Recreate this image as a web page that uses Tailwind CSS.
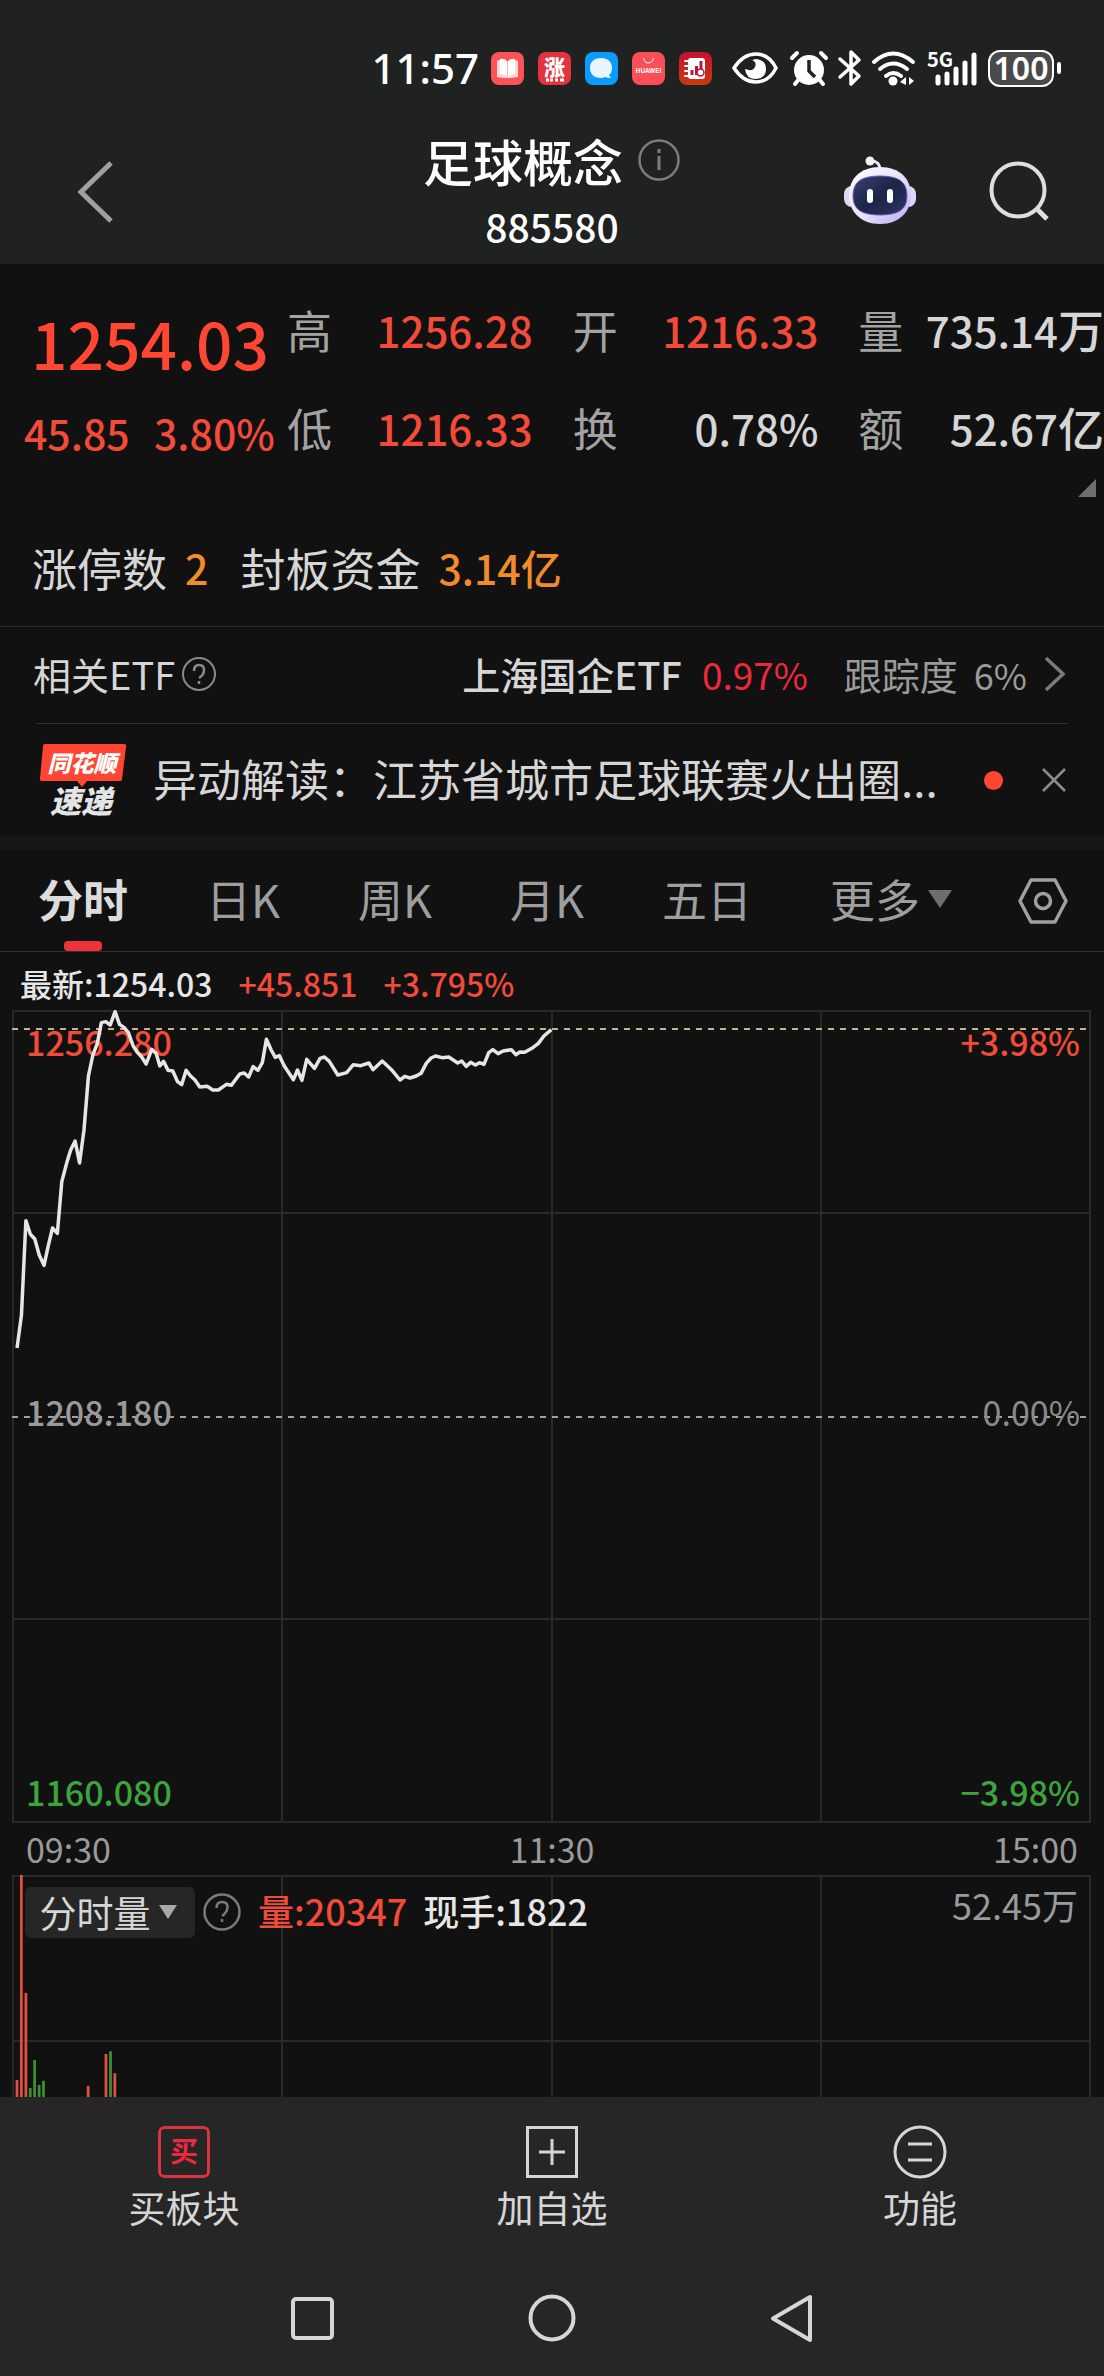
<!DOCTYPE html>
<html lang="zh-CN">
<head>
<meta charset="utf-8">
<meta name="viewport" content="width=device-width, initial-scale=1">
<title>足球概念 885580</title>
<script src="https://cdn.jsdelivr.net/npm/@tailwindcss/browser@4"></script>
</head>
<body class="bg-[#111111] font-['Noto_Sans_CJK_SC','Noto_Sans',sans-serif] text-[#d6d6d6]">
<div class="flex min-h-screen flex-col overflow-x-hidden">

  <!-- Status bar and title -->
  <header class="bg-[#202221] text-white">
    <div class="flex h-[132px] items-center justify-end pt-1 pr-[43px]">
      <span class="mr-3 font-['Noto_Sans'] text-[42px] leading-none font-medium">11:57</span>
      <div class="flex items-center gap-[14px]">
        <svg class="size-[33px]" viewBox="0 0 33 33"><rect width="33" height="33" rx="8" fill="#fb5358"/><path d="M6 9q6-3 10.500 1Q21 6 27 9v16q-6 1-10.500 1Q12 26 6 25z" fill="#ffd9d9"/><path d="M9 7q5-1 7.500 3Q19 6 24 7v15q-5 0-7.500 3Q14 22 9 22z" fill="#fff"/><path d="M16.500 10v14" stroke="#f5b4b4"/></svg>
        <svg class="size-[33px] overflow-visible" viewBox="0 0 33 33"><rect width="33" height="33" rx="8" fill="#e2333f"/><text x="16.500" y="23" text-anchor="middle" font-size="21" font-weight="900" fill="#fff">涨</text><path d="M8 28h3m1 0h3m2 0h3m2 0h4" stroke="#fff" stroke-width="3"/></svg>
        <svg class="size-[33px]" viewBox="0 0 33 33"><rect width="33" height="33" rx="8" fill="#0a9cff"/><path d="M16 6c7 0 11 4 11 10q0 5-3 7l2 3q-4 0-6-1-2 1-4 1C9 26 5 22 5 16S9 6 16 6z" fill="#eaf6ff"/></svg>
        <svg class="size-[33px]" viewBox="0 0 33 33"><rect width="33" height="33" rx="8" fill="#fb4f58"/><path d="M11.500 6q1 5 5 5t5-5" fill="none" stroke="#fff"/><text x="16.500" y="21" text-anchor="middle" font-size="6.500" font-weight="700" fill="#fff">HUAWEI</text></svg>
        <svg class="size-[33px]" viewBox="0 0 33 33"><defs><linearGradient id="note" x2="0" y2="1"><stop stop-color="#c8102e"/><stop offset="1" stop-color="#c93a0c"/></linearGradient></defs><rect width="33" height="33" rx="8" fill="url(#note)"/><rect x="9" y="6" width="17" height="21" rx="3" fill="#fff"/><path d="M6 9h5M6 14h5M6 19h5M6 24h5" stroke="#fff" stroke-width="2" stroke-linecap="round"/><path d="M13 23v-5M17.500 23v-9M22 23V9" stroke="#b3173a" stroke-width="3"/><circle cx="21.500" cy="20.500" r="3.500" fill="#fff" stroke="#b3173a" stroke-width="1.500"/></svg>
      </div>
      <svg class="ml-5 h-10 w-[248px] overflow-visible" viewBox="0 0 248 40" fill="none" stroke="#fff">
        <path d="M2 20Q11 6 24 6t20 14Q37 34 24 34T2 20z" stroke-width="3.500"/>
        <path d="M20 12q5 2 3 7t-10 2q1 10 11 10 10-1 10-10T24 11z" fill="#fff" stroke="none"/>
        <circle cx="77" cy="22" r="15" fill="#fff" stroke="none"/><path d="M60 10l5-5M94 10l-5-5M63 36l4-5M91 36l-4-5" stroke-width="4" stroke-linecap="round"/><path d="M77 12v11l6 6" stroke="#202221" stroke-width="3.500"/>
        <path d="M108 11l19 17-8 8V4l8 8-19 17" stroke-width="3.500" stroke-linejoin="round" stroke-linecap="round"/>
        <path d="M142 14q19-17 39 0M148 21q13-11 27 0M154 28q7-6 15 0" stroke-width="4" stroke-linecap="round"/><circle cx="161" cy="33" r="4.500" fill="#fff" stroke="none"/><path d="M174 29v8l-6-3zM177 29v8l5-4z" fill="#fff" stroke="none"/>
        <path d="M206 29v6M215 26v9M224 21v14M233 15v20M242 7v28" stroke-width="5" stroke-linecap="round"/><text x="195" y="19" font-size="20" font-weight="700" fill="#fff" stroke="none">5G</text>
      </svg>
      <span class="ml-2 flex h-[37px] w-[66px] items-center justify-center rounded-xl border-2 border-white bg-[#4a4a4a] font-['Noto_Sans'] text-[32px] leading-none font-semibold">100</span>
      <span class="ml-[3px] h-3 w-1 rounded-sm bg-white"></span>
    </div>
    <div class="grid h-[132px] grid-cols-[1fr_auto_1fr] items-start">
      <button class="mt-7 ml-[76px] h-16 w-10" aria-label="返回"><svg viewBox="0 0 40 64" class="h-16 w-10" fill="none" stroke="#a0a0a0" stroke-width="5"><path d="M35 3L5 32l30 29"/></svg></button>
      <div class="flex flex-col items-center">
        <div class="flex items-center gap-[14px]">
          <h1 class="text-[50px] leading-[56px] font-medium whitespace-nowrap">足球概念</h1>
          <button class="size-[44px]" aria-label="说明"><svg viewBox="0 0 44 44" fill="none" stroke="#7c7c7c" stroke-width="2.500"><circle cx="22" cy="22" r="19.500"/><path d="M22 18v14M22 11v4" stroke-width="3"/></svg></button>
        </div>
        <p class="mt-4 text-[39px] leading-[44px] font-medium">885580</p>
      </div>
      <div class="mt-[22px] flex justify-end gap-[70px] pr-[54px]">
        <button aria-label="智能助手"><svg class="h-[74px] w-[76px]" viewBox="0 0 76 74"><defs><linearGradient id="shell" x1="0" y1="0" x2="1" y2="1"><stop stop-color="#ffffff"/><stop offset=".55" stop-color="#e6e0fb"/><stop offset="1" stop-color="#b9a8f2"/></linearGradient><linearGradient id="face" x1="0" x2="1" y2="1"><stop stop-color="#39436b"/><stop offset=".5" stop-color="#1b2449"/><stop offset="1" stop-color="#2c3560"/></linearGradient></defs><rect x="2" y="32" width="72" height="21" rx="8" fill="#dcd8fa"/><path d="M28 7q10-1 10 10" fill="none" stroke="#e9e7f7" stroke-width="3"/><circle cx="28" cy="7" r="4.500" fill="#f1f0fa"/><path d="M38 13C58 13 69 25 69 41S58 70 38 70 7 57 7 41 18 13 38 13z" fill="url(#shell)"/><path d="M38 22c19 0 27 6 27 20 0 13-8 19-27 19s-27-6-27-19c0-14 8-20 27-20z" fill="url(#face)" stroke="#7263c8"/><path d="M28 38v8M48 38v8" stroke="#fff" stroke-width="6" stroke-linecap="round"/></svg></button>
        <button aria-label="搜索"><svg class="size-[62px]" viewBox="0 0 62 62" fill="none" stroke="#dedede" stroke-width="4"><circle cx="30" cy="30" r="26.500"/><path d="M48 48l11 11" stroke-width="5"/></svg></button>
      </div>
    </div>
  </header>

  <main class="flex-1">
    <!-- Quote -->
    <section class="border-b border-[#2a2b2b]">
      <div class="flex pt-[17px]">
        <div class="w-[287px] shrink-0 text-[#ff4733]">
          <p class="flex h-[98px] items-center pt-6 pl-[31px] text-[64px] leading-none font-medium">1254.03</p>
          <p class="flex h-[98px] items-center pt-2 pl-[24px] text-[41px] leading-none font-medium text-[#f24b39]"><span class="w-[130px]">45.85</span><span>3.80%</span></p>
        </div>
        <dl class="grid flex-1 grid-cols-3 gap-x-10 text-[45px] leading-[98px] whitespace-nowrap [&_dd]:text-[42px] [&_dd]:font-medium [&_dt]:text-[#a3a3a3] [&>div]:flex [&>div]:justify-between">
          <div><dt>高</dt><dd class="text-[#f24b39]">1256.28</dd></div>
          <div><dt>开</dt><dd class="text-[#f24b39]">1216.33</dd></div>
          <div><dt>量</dt><dd>735.14<span class="text-[46px] leading-none">万</span></dd></div>
          <div><dt>低</dt><dd class="text-[#f24b39]">1216.33</dd></div>
          <div><dt>换</dt><dd>0.78%</dd></div>
          <div><dt>额</dt><dd>52.67<span class="text-[46px] leading-none">亿</span></dd></div>
        </dl>
      </div>
      <div class="flex h-9 items-start justify-end pt-[2px] pr-2"><svg class="h-[18px] w-[18px]" viewBox="0 0 18 18"><path d="M18 0v18H0z" fill="#6e6e6e"/></svg></div>
      <p class="flex h-[113px] items-center pb-1 pl-8 text-[45px] leading-none">涨停数<span class="mr-8 ml-[18px] text-[41px] font-medium text-[#f28c2b]">2</span>封板资金<span class="ml-[18px] text-[41px] font-medium text-[#f28c2b]">3.14亿</span></p>
    </section>

    <!-- Related ETF -->
    <section class="mx-[37px] flex h-[97px] items-center border-b border-[#303131] pb-[2px] text-[38px] leading-none whitespace-nowrap">
      <span class="-ml-1">相关ETF</span>
      <svg class="ml-[6px] size-9" viewBox="0 0 36 36" fill="none" stroke="#8a8a8a" stroke-width="2"><circle cx="18" cy="18" r="16"/><path d="M13 15q0-6 5-6t5 5-5 8M18 25v3" stroke-width="2.500"/></svg>
      <a href="#" class="ml-auto flex items-center"><span class="font-medium">上海国企ETF</span><span class="ml-5 text-[37px] text-[#f0283c]">0.97%</span><span class="ml-9 text-[#9a9a9a]">跟踪度</span><span class="ml-4 text-[36px] text-[#9a9a9a]">6%</span><svg class="ml-4 h-9 w-6" viewBox="0 0 24 36" fill="none" stroke="#7a7a7a" stroke-width="3.500"><path d="M3 2l17 16L3 34"/></svg></a>
    </section>

    <!-- News -->
    <section class="flex h-[112px] items-center pr-[37px] pl-[39px] whitespace-nowrap">
      <svg class="h-[74px] w-[88px] shrink-0 overflow-visible" viewBox="0 0 88 74"><path d="M6 1h79q3 0 2 3l-4 32q0 2-3 2H48l-5 6-5-6H3q-3 0-2-3L4 4q0-3 2-3z" fill="#ff4632"/><text x="43" y="29" text-anchor="middle" font-size="23" font-weight="900" font-style="italic" fill="#fff">同花顺</text><text x="42" y="70" text-anchor="middle" font-size="31" font-weight="900" font-style="italic" fill="#e4e4e4">速递</text></svg>
      <a href="#" class="ml-[26px] min-w-0 pb-1 text-[44px] leading-[60px]">异动解读：江苏省城市足球联赛火出圈...</a>
      <span class="ml-auto size-[19px] shrink-0 rounded-full bg-[#ff4632]"></span>
      <button class="ml-[38px] shrink-0" aria-label="关闭"><svg class="size-[26px]" viewBox="0 0 26 26" stroke="#8c8c8c" stroke-width="2.500"><path d="M2 2l22 22M24 2L2 24"/></svg></button>
    </section>
    <div class="h-[14px] bg-[#161616]"></div>

    <!-- Period tabs -->
    <nav class="flex h-[102px] items-center justify-between border-b border-[#303131] pr-[36px] pl-[38px] text-[45px] leading-none whitespace-nowrap text-[#9e9e9e]">
      <button class="relative h-full pb-1 font-bold text-[#dcdcdc]">分时<span class="absolute bottom-0 left-1/2 h-[10px] w-[38px] -translate-x-1/2 rounded bg-[#ee3338]"></span></button>
      <button class="pb-1">日K</button>
      <button class="pb-1">周K</button>
      <button class="pb-1">月K</button>
      <button class="pb-1">五日</button>
      <button class="-mr-3 flex items-center pb-1">更多<svg class="ml-2 h-5 w-6" viewBox="0 0 24 20"><path d="M0 1h24L12 19z" fill="#6e6e6e"/></svg></button>
      <button aria-label="设置"><svg class="size-[50px]" viewBox="0 0 50 50" fill="none" stroke="#a0a0a0" stroke-width="3.500"><path d="M13 4h24l11 21-11 21H13L2 25z" stroke-linejoin="round"/><circle cx="25" cy="25" r="7.500"/></svg></button>
    </nav>

    <p class="flex h-[58px] items-center gap-[26px] pt-1 pl-5 text-[32px] leading-none font-medium whitespace-nowrap text-[#f24b39]"><span class="text-[#e6e6e6]">最新:1254.03</span><span>+45.851</span><span>+3.795%</span></p>

    <!-- Intraday price chart -->
    <section class="relative h-[813px] text-[34px] leading-[44px] font-medium">
      <svg class="h-full w-full" viewBox="0 1010 1104 813" preserveAspectRatio="none" fill="none">
        <path d="M13 1011H1090V1822H13zM13 1213H1090M13 1619H1090M282 1011V1822M552 1011V1822M821 1011V1822" stroke="#282929" stroke-width="2"/>
        <path d="M12 1029H1090" stroke="#c2b48c" stroke-width="2" stroke-dasharray="6 6"/>
        <path d="M12 1417H1090" stroke="#a0a0a0" stroke-width="2" stroke-dasharray="6 6"/>
      </svg>
      <span class="absolute top-[10px] left-[26px] text-[#f24b39]">1256.280</span>
      <span class="absolute top-[10px] right-[24px] text-[#f24b39]">+3.98%</span>
      <span class="absolute top-[380px] left-[26px] text-[#9a9a9a]">1208.180</span>
      <span class="absolute top-[380px] right-[24px] font-normal text-[#8a8a8a]">0.00%</span>
      <span class="absolute bottom-[9px] left-[26px] text-[#3da43d]">1160.080</span>
      <span class="absolute right-[24px] bottom-[9px] text-[#3da43d]">−3.98%</span>
      <svg class="absolute inset-0 h-full w-full" viewBox="0 1010 1104 813" preserveAspectRatio="none" fill="none">
        <path transform="translate(0 990) scale(.37 .33333)" vector-effect="non-scaling-stroke" stroke="#e6e6e6" stroke-width="3.500" stroke-linejoin="round" d="M46 1074L58 975 70 692 82 733 94 747 106 795 119 826 131 765 142 714 155 730 167 575 180 520 191 480 203 453 215 519 227 420 239 258 251 195 263 160 274 98 286 95 298 105 311 65 323 103 335 112 347 128 360 168 372 188 383 201 395 222 410 178 422 190 432 228 442 214 454 241 467 243 480 275 491 284 503 241 515 258 527 270 540 291 560 289 575 300 590 300 612 283 625 286 648 252 660 249 672 261 684 230 697 241 709 218 720 148 733 180 744 202 755 197 768 227 793 269 804 240 816 271 829 208 850 235 865 205 877 201 890 214 913 255 937 248 955 224 975 227 997 219 1008 239 1033 213 1058 239 1081 270 1094 259 1108 264 1125 258 1138 250 1152 220 1165 204 1177 198 1195 203 1213 201 1237 219 1248 213 1260 229 1272 217 1285 225 1296 218 1308 223 1321 188 1332 179 1346 191 1360 183 1382 179 1394 194 1405 186 1418 187 1440 173 1455 160 1470 138 1490 119"/>
      </svg>
    </section>

    <div class="grid h-[52px] grid-cols-3 items-center px-[26px] text-[34px] leading-none text-[#9a9a9a]"><span>09:30</span><span class="text-center">11:30</span><span class="text-right">15:00</span></div>

    <!-- Volume chart -->
    <section class="relative h-[222px]">
      <svg class="absolute inset-0 h-full w-full" viewBox="0 1875 1104 222" preserveAspectRatio="none" fill="none">
        <path d="M13 2097V1876H1090V2097M13 2041H1090M282 1876V2097M552 1876V2097M821 1876V2097" stroke="#282929" stroke-width="2"/>
        <g transform="translate(0 1740) scale(.3954 .33333)" stroke-width="7"><path d="M43 1072V1020M54 1072V403M65.500 1072V759M223 1072V1038M268 1072V942M290.500 1072V1000" stroke="#e2503f"/><path d="M76.500 1072V1044M87.500 1072V960M99 1072V1035M110 1072V1022M279.500 1072V934" stroke="#3f8f33"/></g>
      </svg>
      <div class="relative flex items-center pt-[11px] pr-[26px] pl-[25px] text-[36px] leading-none whitespace-nowrap">
        <button class="flex h-[51px] w-[170px] items-center justify-center gap-2 rounded-md bg-[#262626] pr-1 text-[37px] text-[#d6d6d6]">分时量<svg class="h-4 w-[18px]" viewBox="0 0 18 16"><path d="M0 1h18L9 15z" fill="#a8a8a8"/></svg></button>
        <svg class="ml-2 size-[38px]" viewBox="0 0 38 38" fill="none" stroke="#7a7a7a" stroke-width="2.500"><circle cx="19" cy="19" r="17.500"/><path d="M13.500 15q0-6 5.500-6t5.500 5-5.500 9M19 26v3"/></svg>
        <span class="ml-[17px] pb-1 font-medium text-[#f24b39]">量:20347</span>
        <span class="ml-4 pb-1 font-medium text-[#e6e6e6]">现手:1822</span>
        <span class="ml-auto pb-4 text-[#9a9a9a]">52.45万</span>
      </div>
    </section>
  </main>

  <footer class="bg-[#262626]">
    <nav class="grid h-[150px] grid-cols-3 pt-7 text-[37px] leading-none">
      <button class="flex flex-col items-center gap-[10px]"><svg class="size-[54px] overflow-visible" viewBox="0 0 54 54"><rect x="2.500" y="2.500" width="49" height="49" rx="5" fill="none" stroke="#d8353d" stroke-width="3"/><text x="27" y="37" text-anchor="middle" font-size="28" font-weight="700" fill="#f0283c">买</text></svg>买板块</button>
      <button class="flex flex-col items-center gap-[10px]"><svg class="size-[54px]" viewBox="0 0 54 54" fill="none" stroke="#d6d6d6" stroke-width="3"><rect x="2.500" y="2.500" width="49" height="49"/><path d="M27 14v26M14 27h26"/></svg>加自选</button>
      <button class="flex flex-col items-center gap-[10px]"><svg class="size-[54px]" viewBox="0 0 54 54" fill="none" stroke="#d6d6d6" stroke-width="3"><circle cx="27" cy="27" r="25"/><path d="M15 19h24M15 35h24"/></svg>功能</button>
    </nav>
    <div class="flex h-[129px] items-center justify-center gap-[190px] pt-3">
      <button aria-label="最近任务"><svg class="size-[50px]" viewBox="0 0 50 50" fill="none" stroke="#d6d6d6" stroke-width="4"><rect x="6" y="6" width="39" height="39" rx="3"/></svg></button>
      <button aria-label="主屏幕"><svg class="size-[50px]" viewBox="0 0 50 50" fill="none" stroke="#d6d6d6" stroke-width="4"><circle cx="25" cy="25" r="21.500"/></svg></button>
      <button aria-label="返回上一级"><svg class="size-[50px]" viewBox="0 0 50 50" fill="none" stroke="#d6d6d6" stroke-width="4" stroke-linejoin="round"><path d="M43 4v43L6 25.500z"/></svg></button>
    </div>
  </footer>
</div>
</body>
</html>
